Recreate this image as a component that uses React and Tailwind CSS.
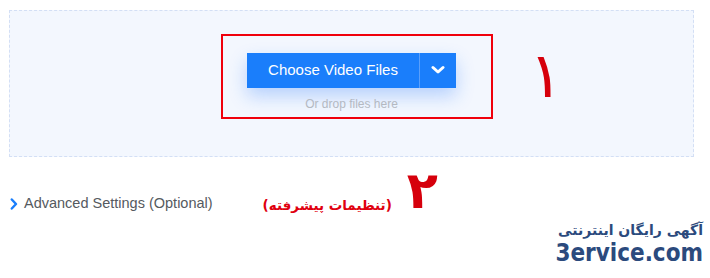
import React from 'react';

const persian = { fontFamily: '"DejaVu Sans", "Noto Sans", sans-serif' };

function ChevronDown() {
  return (
    <svg width="14" height="10" viewBox="0 0 14 10" fill="none">
      <path d="M2 2.5l5 4.5 5-4.5" stroke="#fff" strokeWidth="3" strokeLinecap="round" strokeLinejoin="round" />
    </svg>
  );
}

function ChevronRight() {
  return (
    <svg width="8" height="12" viewBox="0 0 8 12" fill="none">
      <path d="M1.8 1.5l4.2 4.5-4.2 4.5" stroke="#1a7efb" strokeWidth="2.4" strokeLinecap="round" strokeLinejoin="round" />
    </svg>
  );
}

export default function App() {
  return (
    <div
      className="relative w-[710px] h-[278px] overflow-hidden bg-white"
      style={{ fontFamily: '"Liberation Sans", Arial, sans-serif' }}
    >
      <div className="pt-[10px] pl-[9px]">
        {/* drop zone */}
        <div className="w-[685px] h-[147px] border border-dashed border-[#d3dff5] bg-[#f3f7fe] flex flex-col items-center pt-[23px]">
          <div className="ml-[11px] h-[85px] border-2 border-[#f0000c] pl-[24px] pr-[35px] pt-[17px] flex flex-col items-center">
            <div className="flex h-[35px] bg-[#1a7efb] shadow-[0_8px_18px_rgba(26,110,251,0.28)]">
              <button className="w-[172px] h-full text-white text-[15px] flex items-center justify-center">
                Choose Video Files
              </button>
              <div className="w-px h-full bg-[#5a9ffb]" />
              <button className="w-[36px] h-full flex items-center justify-center pb-[1px]">
                <ChevronDown />
              </button>
            </div>
            <p className="mt-[9px] text-[12px] leading-[14px] text-[#b4b9c2]">Or drop files here</p>
          </div>
        </div>

        {/* advanced settings row */}
        <div className="mt-[27px] flex items-center h-[40px]">
          <div className="flex items-center gap-[6px] pl-[1px]">
            <ChevronRight />
            <span className="text-[14.5px] text-[#555a60]">Advanced Settings (Optional)</span>
          </div>
          <span dir="rtl" className="ml-[50px] mt-[2px] text-[13.5px] font-bold text-[#e0000f]" style={persian}>
            (تنظیمات پیشرفته)
          </span>
          <span className="ml-[15px] mt-[-28px] text-[51px] leading-none font-bold text-[#d6000c]" style={persian}>
            ۲
          </span>
        </div>

        {/* watermark */}
        <div className="flex flex-col items-end pr-[7px] mt-[-4px]">
          <span dir="rtl" className="text-[14px] leading-[20px] font-bold text-[#2b4a7d]" style={persian}>
            آگهی رایگان اینترنتی
          </span>
          <span
            className="text-[24px] leading-[26px] font-bold text-[#2b4a7d]"
            style={{ fontFamily: '"DejaVu Sans Condensed", "DejaVu Sans", sans-serif' }}
          >
            3ervice.com
          </span>
        </div>
      </div>

      {/* annotation digit one */}
      <span className="absolute left-[529px] top-[44px] text-[63px] leading-none text-[#d6000c]" style={persian}>
        ۱
      </span>
    </div>
  );
}
